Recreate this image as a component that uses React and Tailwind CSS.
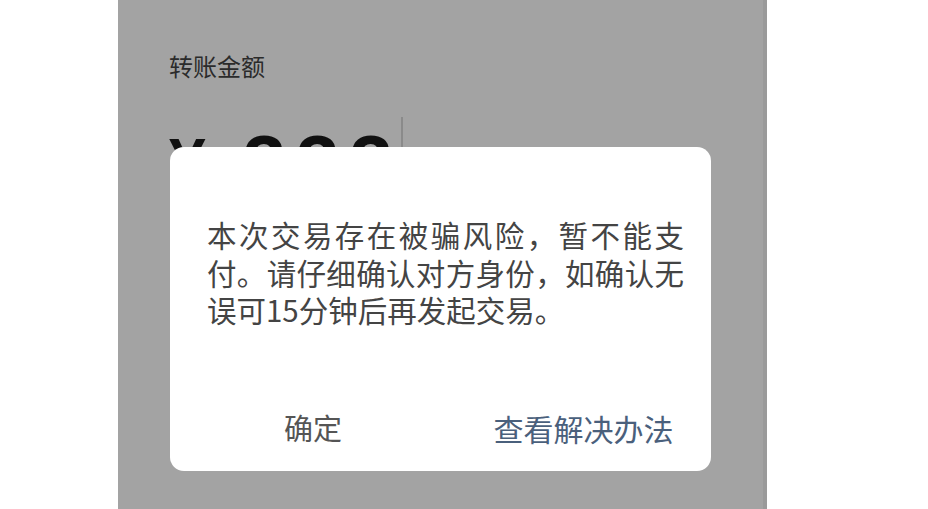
import React from "react";

const cjk = { fontFamily: '"Noto Sans CJK SC", "Noto Sans", sans-serif' };

const App = () => {
  return (
    <div className="flex w-[928px] h-[509px] bg-white overflow-hidden" style={cjk}>
      {/* left white margin */}
      <div className="w-[118px] shrink-0" />

      {/* dimmed phone screen */}
      <div className="relative w-[649px] h-[509px] shrink-0 bg-[#a3a3a3] border-r-[4px] border-[#9a9a9a]">
        <div className="pl-[51px] pt-[51px]">
          <p className="text-[24px] leading-[30px] text-[#2b2b2b]">转账金额</p>

          {/* amount input */}
          <div className="flex items-start mt-[43px]">
            <span
              className="text-[66px] leading-none font-bold text-[#111] mt-[5px]"
              style={{ fontFamily: '"Liberation Sans", Arial, sans-serif' }}
            >
              ¥
            </span>
            <span
              className="ml-[37px] text-[78px] leading-none font-bold text-[#111] tracking-[10px]"
              style={{ fontFamily: '"Liberation Sans", Arial, sans-serif' }}
            >
              333
            </span>
            <span className="w-[2px] h-[40px] bg-[#8a8a8a] -mt-[7px] ml-[-2px]" />
          </div>
        </div>

        {/* risk warning dialog */}
        <div className="absolute left-[52px] top-[147px] w-[541px] h-[324px] bg-white rounded-[14px] flex flex-col">
          <p className="pl-[37px] pt-[69px] w-[514px] text-[29.5px] leading-[37.5px] text-[#444] text-justify">
            本次交易存在被骗风险，暂不能支付。请仔细确认对方身份，如确认无误可15分钟后再发起交易。
          </p>
          <div className="mt-auto flex h-[86px]">
            <button className="w-[286px] flex items-center justify-center text-[29px] text-[#555]">
              确定
            </button>
            <button className="flex-1 flex items-center justify-center text-[30px] text-[#4a607c]">
              查看解决办法
            </button>
          </div>
        </div>
      </div>

      <div className="flex-1" />
    </div>
  );
};

export default App;
